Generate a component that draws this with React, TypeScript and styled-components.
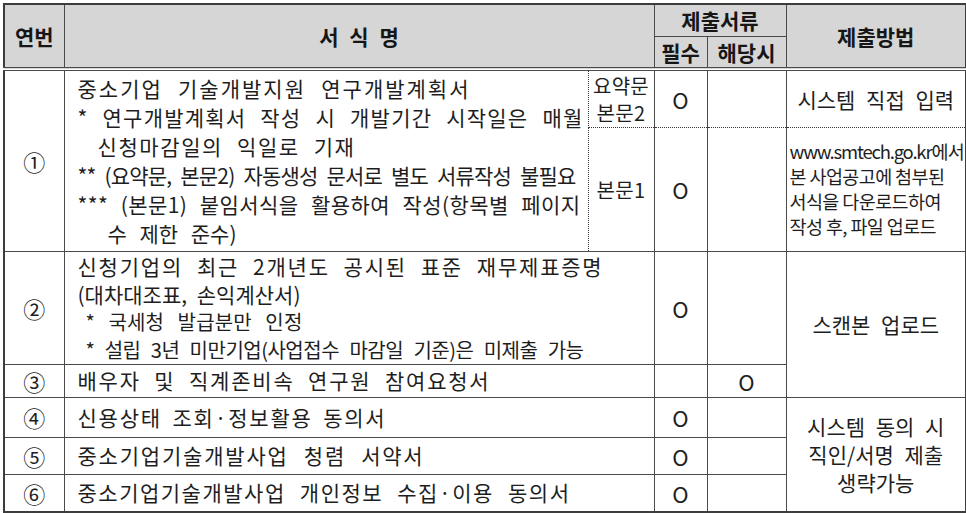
import React from 'react';
import styled, { createGlobalStyle } from 'styled-components';

const GlobalStyle = createGlobalStyle`
  html, body {
    margin: 0;
    padding: 0;
    background: #ffffff;
  }
  body {
    font-family: "Noto Sans CJK KR", "Noto Sans", sans-serif;
    color: #1e1e1e;
  }
`;

const Page = styled.div`
  padding: 3px 0 0 3px;
`;

const Table = styled.table`
  border-collapse: collapse;
  table-layout: fixed;
  width: 962px;
  border: 2px solid #3c3c3c;
`;

const Row = styled.tr<{ $h: number }>`
  height: ${(p) => p.$h}px;
`;

const line = '1px solid #4a4a4a';
const dots = '1px dotted #333333';

const HeadCell = styled.th<{ $double?: boolean }>`
  background: #d6d6d6;
  border: ${line};
  border-bottom: ${(p) => (p.$double ? '4px double #4a4a4a' : line)};
  font-size: 21px;
  font-weight: 700;
  color: #161616;
  text-align: center;
  vertical-align: middle;
  padding: 0;
  word-spacing: 6px;
`;

const Cell = styled.td<{
  $dotTop?: boolean;
  $dotBottom?: boolean;
  $dotLeft?: boolean;
  $dotRight?: boolean;
}>`
  border: ${line};
  border-top: ${(p) => (p.$dotTop ? dots : line)};
  border-bottom: ${(p) => (p.$dotBottom ? dots : line)};
  border-left: ${(p) => (p.$dotLeft ? dots : line)};
  border-right: ${(p) => (p.$dotRight ? dots : line)};
  vertical-align: middle;
  padding: 0;
`;

const NumCell = styled(Cell)`
  text-align: center;
  font-size: 22px;
`;

const FormCell = styled(Cell)`
  padding: 0 0 0 13px;
  font-size: 21px;
  overflow: hidden;
`;

const SubCell = styled(Cell)`
  text-align: center;
  font-size: 20px;
  line-height: 27px;
  letter-spacing: 0.3px;
`;

const MarkCell = styled(Cell)`
  text-align: center;
  font-size: 22px;
`;

const MethodCell = styled(Cell)<{ $left?: boolean }>`
  text-align: ${(p) => (p.$left ? 'left' : 'center')};
  padding: ${(p) => (p.$left ? '0 0 0 3px' : '0')};
  font-size: ${(p) => (p.$left ? '18.5px' : '21px')};
  line-height: ${(p) => (p.$left ? '25px' : '28px')};
  letter-spacing: ${(p) => (p.$left ? '-0.6px' : '0')};
  word-spacing: ${(p) => (p.$left ? '0' : '6px')};
`;

/* one printed line of the form name, stretched to the width it has in the print */
const Line = styled.div<{ $w: number; $indent?: number; $lh?: number; $size?: number; $ls?: number }>`
  width: ${(p) => p.$w}px;
  margin-left: ${(p) => p.$indent ?? 0}px;
  line-height: ${(p) => p.$lh ?? 29}px;
  font-size: ${(p) => (p.$size ? `${p.$size}px` : 'inherit')};
  letter-spacing: ${(p) => p.$ls ?? 1.8}px;
  text-align: justify;
  text-align-last: justify;
`;

const Url = styled.span`
  letter-spacing: -1.2px;
`;

const App: React.FC = () => {
  return (
    <Page>
      <GlobalStyle />
      <Table>
        <colgroup>
          <col style={{ width: 60 }} />
          <col style={{ width: 524 }} />
          <col style={{ width: 66 }} />
          <col style={{ width: 53 }} />
          <col style={{ width: 79 }} />
          <col style={{ width: 180 }} />
        </colgroup>
        <thead>
          <Row $h={32}>
            <HeadCell rowSpan={2} $double>연번</HeadCell>
            <HeadCell rowSpan={2} colSpan={2} $double>서 식 명</HeadCell>
            <HeadCell colSpan={2}>제출서류</HeadCell>
            <HeadCell rowSpan={2} $double>제출방법</HeadCell>
          </Row>
          <Row $h={33}>
            <HeadCell $double>필수</HeadCell>
            <HeadCell $double>해당시</HeadCell>
          </Row>
        </thead>
        <tbody>
          <Row $h={58}>
            <NumCell rowSpan={2}>①</NumCell>
            <FormCell rowSpan={2} $dotRight>
              <Line $w={393} $ls={2}>중소기업 기술개발지원 연구개발계획서</Line>
              <Line $w={506} $ls={1.2}>* 연구개발계획서 작성 시 개발기간 시작일은 매월</Line>
              <Line $w={258} $indent={20} $ls={1.6}>신청마감일의 익일로 기재</Line>
              <Line $w={498} $ls={-0.8}>** (요약문, 본문2) 자동생성 문서로 별도 서류작성 불필요</Line>
              <Line $w={503} $ls={0.4}>*** (본문1) 붙임서식을 활용하여 작성(항목별 페이지</Line>
              <Line $w={129} $indent={30} $ls={0}>수 제한 준수)</Line>
            </FormCell>
            <SubCell $dotLeft $dotBottom>
              요약문
              <br />
              본문2
            </SubCell>
            <MarkCell $dotBottom>O</MarkCell>
            <MarkCell $dotBottom />
            <MethodCell $dotBottom>시스템 직접 입력</MethodCell>
          </Row>
          <Row $h={124}>
            <SubCell $dotLeft $dotTop>본문1</SubCell>
            <MarkCell $dotTop>O</MarkCell>
            <MarkCell $dotTop />
            <MethodCell $dotTop $left>
              <Url>www.smtech.go.kr</Url>에서
              <br />
              본 사업공고에 첨부된
              <br />
              서식을 다운로드하여
              <br />
              작성 후, 파일 업로드
            </MethodCell>
          </Row>
          <Row $h={113}>
            <NumCell>②</NumCell>
            <FormCell colSpan={2}>
              <Line $w={526} $lh={28} $ls={1.8}>신청기업의 최근 2개년도 공시된 표준 재무제표증명</Line>
              <Line $w={223} $lh={28} $ls={0}>(대차대조표, 손익계산서)</Line>
              <Line $w={217} $lh={28} $indent={8} $size={20} $ls={0.2}>* 국세청 발급분만 인정</Line>
              <Line $w={498} $lh={28} $indent={8} $size={20} $ls={-0.5}>* 설립 3년 미만기업(사업접수 마감일 기준)은 미제출 가능</Line>
            </FormCell>
            <MarkCell>O</MarkCell>
            <MarkCell />
            <MethodCell rowSpan={2}>스캔본 업로드</MethodCell>
          </Row>
          <Row $h={32}>
            <NumCell>③</NumCell>
            <FormCell colSpan={2}>
              <Line $w={413}>배우자 및 직계존비속 연구원 참여요청서</Line>
            </FormCell>
            <MarkCell />
            <MarkCell>O</MarkCell>
          </Row>
          <Row $h={40}>
            <NumCell>④</NumCell>
            <FormCell colSpan={2}>
              <Line $w={309}>신용상태 조회·정보활용 동의서</Line>
            </FormCell>
            <MarkCell>O</MarkCell>
            <MarkCell />
            <MethodCell rowSpan={3}>
              시스템 동의 시
              <br />
              직인/서명 제출
              <br />
              생략가능
            </MethodCell>
          </Row>
          <Row $h={37}>
            <NumCell>⑤</NumCell>
            <FormCell colSpan={2}>
              <Line $w={347}>중소기업기술개발사업 청렴 서약서</Line>
            </FormCell>
            <MarkCell>O</MarkCell>
            <MarkCell />
          </Row>
          <Row $h={38}>
            <NumCell>⑥</NumCell>
            <FormCell colSpan={2}>
              <Line $w={493} $ls={1.5}>중소기업기술개발사업 개인정보 수집·이용 동의서</Line>
            </FormCell>
            <MarkCell>O</MarkCell>
            <MarkCell />
          </Row>
        </tbody>
      </Table>
    </Page>
  );
};

export default App;
